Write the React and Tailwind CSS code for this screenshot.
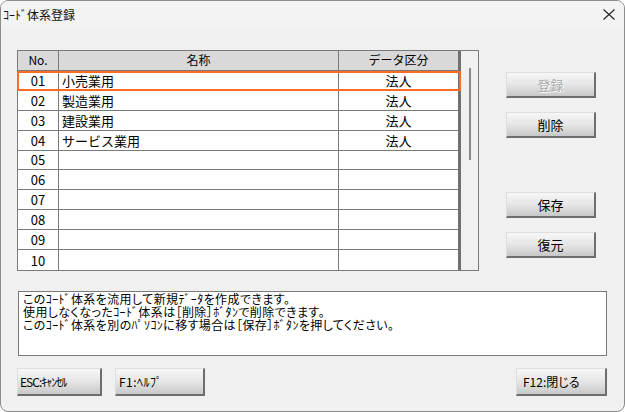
import React from "react";

const FONT = "font-['Noto_Sans_CJK_JP','Noto_Sans',sans-serif]";

function Btn({ children, disabled, className = "" }) {
  return (
    <div
      className={`flex items-center h-[26px] border border-t-[#dedede] border-l-[#dedede] border-r-2 border-b-2 border-r-[#6e6e6e] border-b-[#6e6e6e] bg-linear-to-b from-[#f7f7f7] via-[#e6e6e6] to-[#c8c8c8] leading-none whitespace-nowrap ${
        disabled ? "text-[#a8a8a8] [text-shadow:1px_1px_0_#ffffff]" : "text-black"
      } ${className}`}
    >
      {children}
    </div>
  );
}

const rows = [
  ["01", "小売業用", "法人"],
  ["02", "製造業用", "法人"],
  ["03", "建設業用", "法人"],
  ["04", "サービス業用", "法人"],
  ["05", "", ""],
  ["06", "", ""],
  ["07", "", ""],
  ["08", "", ""],
  ["09", "", ""],
  ["10", "", ""],
];

export default function App() {
  return (
    <div
      className={`w-[625px] h-[412px] bg-[#f0f0f0] border border-[#8c8c8c] rounded-[8px] overflow-hidden flex flex-col ${FONT}`}
    >
      {/* title bar */}
      <div className="h-[28px] shrink-0 bg-[#f3f3f3] flex items-center justify-between pl-[2px] pr-[9px]">
        <span className="text-[12px] leading-none text-[#111]">ｺｰﾄﾞ体系登録</span>
        <svg width="12" height="11" viewBox="0 0 12 11" className="mt-[-1px]">
          <path d="M0.5 0.5 L11.5 10.5 M11.5 0.5 L0.5 10.5" stroke="#222" strokeWidth="1.1" fill="none" />
        </svg>
      </div>

      {/* body */}
      <div className="flex flex-col pl-[16px] pr-[17px] pt-[21px]">
        <div className="flex">
          {/* table */}
          <div className="relative w-[462px] h-[221px] border border-[#7a7a7a] flex bg-white">
            <div className="w-[440px] flex flex-col">
              <div className="flex h-[20px] border-b border-[#7a7a7a] bg-[#d9d9d9] text-[12px] leading-none">
                <div className="w-[41px] border-r border-[#7a7a7a] flex items-center justify-center">No.</div>
                <div className="w-[280px] border-r border-[#7a7a7a] flex items-center justify-center">名称</div>
                <div className="flex-1 flex items-center justify-center">データ区分</div>
              </div>
              {rows.map(([no, name, kind], i) => (
                <div
                  key={no}
                  className={`flex h-[20px] ${i < rows.length - 1 ? "border-b border-[#7a7a7a]" : ""} text-[13px] leading-none`}
                >
                  <div className="w-[41px] border-r border-[#7a7a7a] flex items-center justify-center">{no}</div>
                  <div className="w-[280px] border-r border-[#7a7a7a] flex items-center pl-[3px]">{name}</div>
                  <div className="flex-1 flex items-center justify-center">{kind}</div>
                </div>
              ))}
            </div>
            <div className="w-[3px] bg-[#707070]" />
            <div className="flex-1 bg-[#f0f0f0] pl-[8px] pt-[17px]">
              <div className="w-[2px] h-[92px] bg-[#8a8a8a]" />
            </div>
            {/* selection highlight */}
            <div className="absolute left-[-1px] top-[20px] w-[444px] h-[20px] border-2 border-[#ff6b21] pointer-events-none" />
          </div>

          {/* right buttons */}
          <div className="ml-[27px] pt-[22px] flex flex-col text-[13px]">
            <Btn disabled className="w-[90px] justify-center">登録</Btn>
            <Btn className="w-[90px] justify-center mt-[14px]">削除</Btn>
            <Btn className="w-[90px] justify-center mt-[54px]">保存</Btn>
            <Btn className="w-[90px] justify-center mt-[14px]">復元</Btn>
          </div>
        </div>

        {/* message box */}
        <div className="mt-[20px] ml-[1px] w-[589px] h-[65px] border border-[#7a7a7a] bg-white pl-[4px] pt-[0px] text-[12px] leading-[13px] tracking-[0.4px] [font-feature-settings:'palt'] text-black">
          <div>このｺｰﾄﾞ体系を流用して新規ﾃﾞｰﾀを作成できます。</div>
          <div>使用しなくなったｺｰﾄﾞ体系は［削除］ﾎﾞﾀﾝで削除できます。</div>
          <div>このｺｰﾄﾞ体系を別のﾊﾟｿｺﾝに移す場合は［保存］ﾎﾞﾀﾝを押してください。</div>
        </div>

        {/* bottom buttons */}
        <div className="mt-[12px] flex text-[12px] [font-feature-settings:'palt']">
          <Btn className="w-[85px] h-[28px] pl-[2px] tracking-[-1px]">ESC:ｷｬﾝｾﾙ</Btn>
          <Btn className="w-[90px] h-[28px] ml-[13px] pl-[3px] tracking-[0.5px]">F1:ﾍﾙﾌﾟ</Btn>
          <Btn className="w-[91px] h-[28px] ml-auto pl-[6px]">F12:閉じる</Btn>
        </div>
      </div>
    </div>
  );
}
